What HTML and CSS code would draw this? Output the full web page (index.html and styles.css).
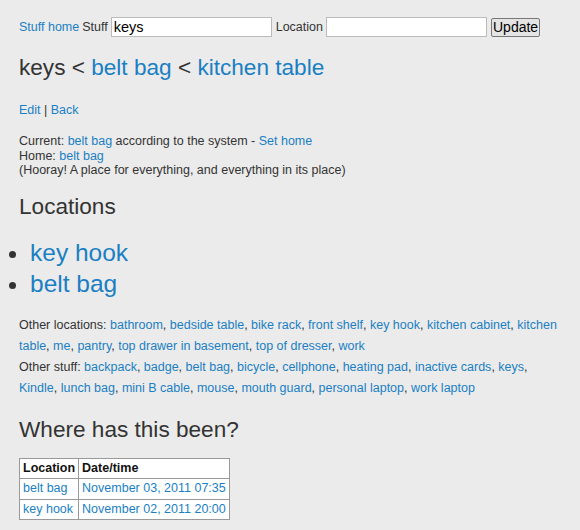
FILE: index.html
```html
<!DOCTYPE html>
<html lang="en">
<head>
    <meta charset="UTF-8">
    <title>keys - Stuff</title>
    <link rel="stylesheet" href="styles.css">
</head>
<body>
    <form class="topbar" autocomplete="off">
        <a href="#">Stuff home</a>
        <label for="stuff">Stuff</label>
        <input type="text" id="stuff" value="keys">
        <label for="location">Location</label>
        <input type="text" id="location">
        <button type="submit">Update</button>
    </form>

    <h1>keys &lt; <a href="#">belt bag</a> &lt; <a href="#">kitchen table</a></h1>

    <p class="actions"><a href="#">Edit</a> | <a href="#">Back</a></p>

    <div class="status">
        Current: <a href="#">belt bag</a> according to the system - <a href="#">Set home</a><br>
        Home: <a href="#">belt bag</a><br>
        (Hooray! A place for everything, and everything in its place)
    </div>

    <h2>Locations</h2>
    <ul class="locations">
        <li><a href="#">key hook</a></li>
        <li><a href="#">belt bag</a></li>
    </ul>

    <div class="others">
        Other locations: <a href="#">bathroom</a>, <a href="#">bedside table</a>, <a href="#">bike rack</a>, <a href="#">front shelf</a>, <a href="#">key hook</a>, <a href="#">kitchen cabinet</a>, <a href="#">kitchen table</a>, <a href="#">me</a>, <a href="#">pantry</a>, <a href="#">top drawer in basement</a>, <a href="#">top of dresser</a>, <a href="#">work</a><br>
        Other stuff: <a href="#">backpack</a>, <a href="#">badge</a>, <a href="#">belt bag</a>, <a href="#">bicycle</a>, <a href="#">cellphone</a>, <a href="#">heating pad</a>, <a href="#">inactive cards</a>, <a href="#">keys</a>, <a href="#">Kindle</a>, <a href="#">lunch bag</a>, <a href="#">mini B cable</a>, <a href="#">mouse</a>, <a href="#">mouth guard</a>, <a href="#">personal laptop</a>, <a href="#">work laptop</a>
    </div>

    <h2>Where has this been?</h2>
    <table class="history">
        <tr><th>Location</th><th>Date/time</th></tr>
        <tr><td><a href="#">belt bag</a></td><td><a href="#">November 03, 2011 07:35</a></td></tr>
        <tr><td><a href="#">key hook</a></td><td><a href="#">November 02, 2011 20:00</a></td></tr>
    </table>
</body>
</html>
```

FILE: styles.css
```css
body {
    margin: 0;
    padding: 0 19px;
    background: #ebebeb;
    color: #333;
    font-family: 'Liberation Sans', Arial, sans-serif;
    font-size: 12.5px;
}
a {
    color: #1a7fc4;
    text-decoration: none;
}
.topbar {
    display: flex;
    align-items: center;
    gap: 3px;
    margin: 17px 0 0 0;
}
.topbar label {
    color: #333;
}
.topbar label[for="location"] {
    margin-left: 1px;
}
.topbar input {
    width: 155px;
    height: 16px;
    padding: 1px 2px;
    border: 1px solid #bbb;
    background: #fff;
    font-family: 'Liberation Sans', Arial, sans-serif;
    font-size: 14.5px;
    color: #000;
}
.topbar button {
    margin-left: 1px;
    padding: 0 1px;
    height: 19px;
    font-family: 'Liberation Sans', Arial, sans-serif;
    font-size: 14px;
    color: #000;
    background: #e4e4e4;
    border: 1px solid #777;
    border-radius: 2px;
}
h1 {
    font-size: 22.6px;
    font-weight: normal;
    margin: 18px 0 22px 0;
}
h2 {
    font-size: 22.6px;
    font-weight: normal;
    margin: 0;
}
.actions {
    margin: 0 0 17px 0;
}
.status {
    line-height: 14.5px;
    margin-bottom: 16px;
}
.locations {
    margin: 17px 0 16px -19px;
    padding-left: 30px;
    font-size: 24.5px;
    line-height: 31px;
}
.locations li::marker {
    color: #333;
}
.others {
    line-height: 21px;
    margin-bottom: 18px;
}
.history {
    border-collapse: collapse;
    background: #fff;
    margin-top: 15px;
}
.history th,
.history td {
    border: 1px solid #999;
    padding: 2px 3px;
    line-height: 15.5px;
    text-align: left;
    white-space: nowrap;
}
.history th {
    color: #111;
}
```
